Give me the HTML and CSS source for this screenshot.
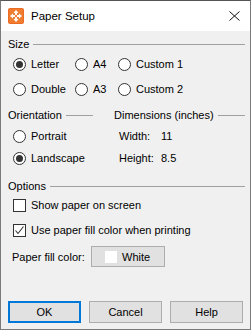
FILE: index.html
```html
<!DOCTYPE html>
<html>
<head>
    <title>Paper Setup</title>
    <link rel="stylesheet" href="styles.css">
</head>
<body>
    <div class="window">
        <div class="titlebar">
            <svg class="app-icon" width="16" height="16" viewBox="0 0 16 16">
                <rect x="0" y="0" width="16" height="16" rx="2" fill="#ea6b24"/>
                <rect x="1" y="1" width="14" height="14" rx="1" fill="#f07d2f"/>
                <!-- four arrows pointing out of the centre -->
                <path d="M8 2 L10.5 5 L9 5 L9 7 L7 7 L7 5 L5.5 5 Z" fill="#fff"/>
                <path d="M8 14 L10.5 11 L9 11 L9 9 L7 9 L7 11 L5.5 11 Z" fill="#fff"/>
                <path d="M2 8 L5 5.5 L5 7 L7 7 L7 9 L5 9 L5 10.5 Z" fill="#fff"/>
                <path d="M14 8 L11 5.5 L11 7 L9 7 L9 9 L11 9 L11 10.5 Z" fill="#fff"/>
                <circle cx="8" cy="8" r="1.2" fill="#f07d2f"/>
            </svg>
            <span class="title">Paper Setup</span>
            <svg class="close" width="11" height="10" viewBox="0 0 11 10">
                <path d="M0.5 0.5 L10.5 9.5 M10.5 0.5 L0.5 9.5" stroke="#111" stroke-width="1" fill="none"/>
            </svg>
        </div>

        <div class="content">
            <div class="group-head head-size"><span>Size</span><i class="rule"></i></div>
            <div class="size-grid">
                <label class="opt"><span class="radio checked"></span>Letter</label>
                <label class="opt"><span class="radio"></span>A4</label>
                <label class="opt"><span class="radio"></span>Custom 1</label>
                <label class="opt"><span class="radio"></span>Double</label>
                <label class="opt"><span class="radio"></span>A3</label>
                <label class="opt"><span class="radio"></span>Custom 2</label>
            </div>

            <div class="two-col">
                <div class="col-orient">
                    <div class="group-head"><span>Orientation</span><i class="rule"></i></div>
                    <label class="opt first"><span class="radio"></span>Portrait</label>
                    <label class="opt second"><span class="radio checked"></span>Landscape</label>
                </div>
                <div class="col-dims">
                    <div class="group-head"><span>Dimensions (inches)</span><i class="rule"></i></div>
                    <div class="dim first"><span class="dim-label">Width:</span><span>11</span></div>
                    <div class="dim second"><span class="dim-label">Height:</span><span>8.5</span></div>
                </div>
            </div>

            <div class="group-head head-options"><span>Options</span><i class="rule"></i></div>
            <label class="opt cb-first"><span class="check"></span>Show paper on screen</label>
            <label class="opt cb-second"><span class="check checked"><svg width="11" height="11" viewBox="0 0 11 11"><path d="M1.5 5.5 L4 8.5 L9.5 1.5" stroke="#333" stroke-width="1.1" fill="none"/></svg></span>Use paper fill color when printing</label>

            <div class="fill-row">
                <span class="fill-label">Paper fill color:</span>
                <button class="btn swatch-btn"><span class="swatch"></span>White</button>
            </div>

            <div class="actions">
                <button class="btn default">OK</button>
                <button class="btn">Cancel</button>
                <button class="btn">Help</button>
            </div>
        </div>
    </div>
</body>
</html>
```

FILE: styles.css
```css
body { margin: 0; font-family: "Liberation Sans", Arial, sans-serif; font-size: 11px; color: #000; }
.window { width: 251px; height: 330px; box-sizing: border-box; border: 1px solid #7a7a7a; border-top-color: #555; background: #f0f0f0; display: flex; flex-direction: column; }

.titlebar { height: 30px; background: #fff; display: flex; align-items: center; padding-left: 7px; }
.app-icon { display: block; }
.title { margin-left: 7px; font-size: 11.5px; }
.close { margin-left: auto; margin-right: 10px; }

.content { flex: 1; display: flex; flex-direction: column; padding: 0 5px 6px 7px; }

.group-head { display: flex; align-items: center; height: 14px; line-height: 14px; }
.group-head span { white-space: nowrap; }
.rule { flex: 1; height: 1px; background: #a0a0a0; margin-left: 4px; }
.head-size { margin-top: 6px; }
.head-options { margin-top: 11px; }

.opt { display: flex; align-items: center; height: 20px; padding-left: 5px; white-space: nowrap; }
.radio { width: 11px; height: 11px; border: 1px solid #333; border-radius: 50%; background: #fff; margin-right: 5px; position: relative; flex: none; }
.radio.checked::after { content: ""; position: absolute; left: 2px; top: 2px; width: 7px; height: 7px; border-radius: 50%; background: #333; }
.check { width: 11px; height: 11px; border: 1px solid #333; background: #fff; margin-right: 5px; flex: none; display: flex; }

.size-grid { display: grid; grid-template-columns: 62px 43px auto; row-gap: 5px; margin-top: 3px; }

.two-col { display: flex; margin-top: 9px; }
.col-orient { width: 85px; }
.col-dims { flex: 1; margin-left: 21px; }
.first { margin-top: 4px; }
.second { margin-top: 2px; }
.dim { display: flex; align-items: center; height: 20px; padding-left: 5px; }
.dim-label { width: 42px; }

.cb-first { margin-top: 2px; }
.cb-second { margin-top: 5px; }

.fill-row { display: flex; align-items: center; margin-top: 6px; padding-left: 4px; }
.fill-label { width: 79px; }

.btn { font: inherit; color: #000; background: #e1e1e1; border: 1px solid #adadad; width: 73px; height: 22px; padding: 0; }
.swatch-btn { width: 74px; height: 21px; display: flex; align-items: center; padding-left: 13px; }
.swatch { width: 12px; height: 12px; background: #fff; margin-right: 5px; }
.btn.default { border: 2px solid #0078d7; }

.actions { margin-top: auto; display: flex; gap: 8px; }
```
